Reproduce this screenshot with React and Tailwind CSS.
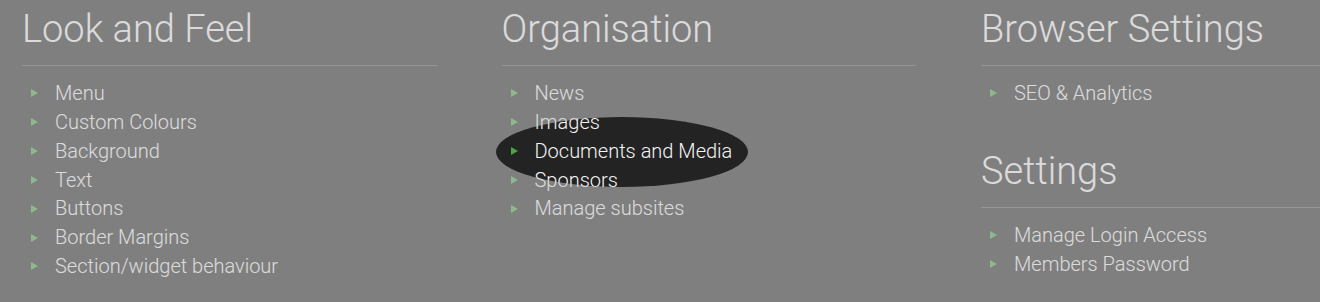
import React from "react";

const columns = [
  [
    {
      title: "Look and Feel",
      items: [
        "Menu",
        "Custom Colours",
        "Background",
        "Text",
        "Buttons",
        "Border Margins",
        "Section/widget behaviour",
      ],
    },
  ],
  [
    {
      title: "Organisation",
      items: ["News", "Images", "Documents and Media", "Sponsors", "Manage subsites"],
    },
  ],
  [
    { title: "Browser Settings", items: ["SEO & Analytics"] },
    { title: "Settings", items: ["Manage Login Access", "Members Password"] },
  ],
];

function Arrow() {
  return (
    <svg width="7" height="8" viewBox="0 0 7 8" className="block">
      <path d="M0 0 L7 4 L0 8 Z" fill="#43a843" />
    </svg>
  );
}

function Section({ title, items, first }) {
  return (
    <div className={first ? "" : "mt-[42px]"}>
      <h2 className="text-[38px] font-light leading-[43px] text-[#f4f4f4] border-b border-[#525252] pb-[14px]">
        {title}
      </h2>
      <ul className="pt-[13px]">
        {items.map((it) => (
          <li key={it} className="flex items-center h-[28.85px] text-[20px] font-light leading-[28.85px] text-[#f4f4f4]">
            <span className="w-[33px] pl-[9px] shrink-0 flex items-center">
              <Arrow />
            </span>
            <span>{it}</span>
          </li>
        ))}
      </ul>
    </div>
  );
}

export default function App() {
  return (
    <div
      className="relative w-full h-[302px] overflow-hidden bg-[#232323]"
      style={{ fontFamily: "Roboto, 'Liberation Sans', sans-serif" }}
    >
      <div className="grid grid-cols-[414.5px_414.5px_414.5px] gap-x-[65px] pl-[22px] pt-[8px] w-max">
        {columns.map((col, i) => (
          <div key={i}>
            {col.map((s, j) => (
              <Section key={s.title} title={s.title} items={s.items} first={j === 0} />
            ))}
          </div>
        ))}
      </div>
      <div className="absolute left-[496px] top-[117px] w-[252px] h-[70px] rounded-[50%] shadow-[0_0_0_3000px_rgba(200,200,200,0.56)] pointer-events-none" />
    </div>
  );
}
